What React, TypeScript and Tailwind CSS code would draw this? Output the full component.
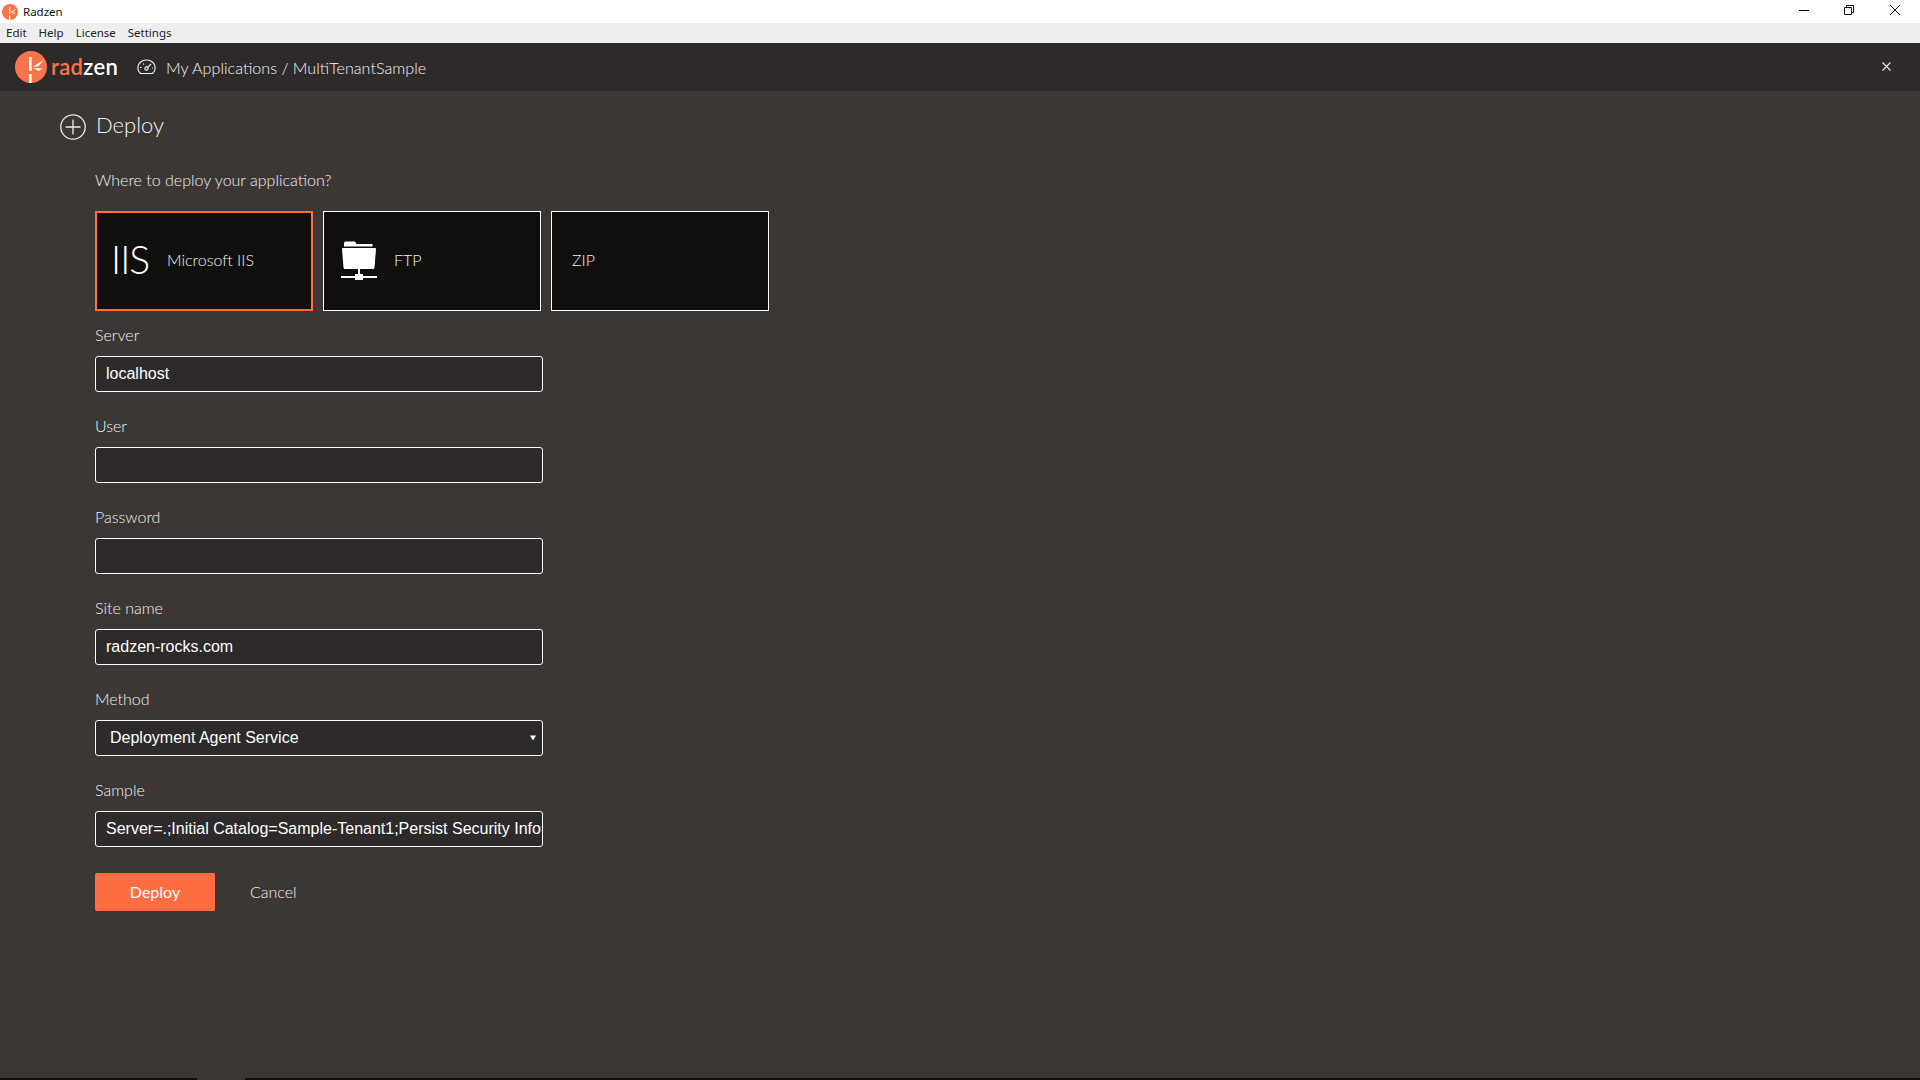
import React from "react";

const lato = "font-['Lato','Liberation_Sans',sans-serif]";
const arial = "font-['Liberation_Sans',Arial,sans-serif]";

function Logo({ size }: { size: number }) {
  return (
    <svg width={size} height={size} viewBox="0 0 32 32" className="shrink-0">
      <circle cx="16" cy="16" r="16" fill="#f9744b" />
      <rect x="14" y="6" width="2.6" height="14" fill="#fff" />
      <rect x="14" y="23" width="2.6" height="9" fill="#fff" />
      <path d="M18 15.5 L29 9 L23 15.6 Z" fill="#fff" />
      <path d="M18 17 L27 17.5 L24 20 Z" fill="#fff" />
    </svg>
  );
}

function Field({ label, value, pad = "pl-[10px] pr-[10px]" }: { label: string; value: string; pad?: string }) {
  return (
    <div className="flex flex-col">
      <label className={`${lato} text-[16px] font-light leading-[20px] text-[#f0f0f0] mb-[11px]`}>{label}</label>
      <input
        readOnly
        value={value}
        className={`${arial} ${pad} h-[36px] w-[448px] rounded-[3px] border border-white bg-[#2e2a2a] text-[16px] text-white outline-none`}
      />
    </div>
  );
}

function Tile({ active, children }: { active?: boolean; children: React.ReactNode }) {
  return (
    <div
      className={`flex h-[100px] w-[218px] items-center bg-[#100f0e] pb-[3px] ${active ? "border-2 border-[#ff6d41]" : "border border-white"}`}
    >
      {children}
    </div>
  );
}

export default function App() {
  return (
    <div className="flex h-[1080px] w-[1920px] flex-col overflow-hidden bg-[#3c3735]">
      <div className="flex h-[23px] items-center justify-between bg-white">
        <div className="flex items-center pl-[2px]">
          <Logo size={16} />
          <span className="ml-[5px] font-['Noto_Sans',sans-serif] text-[11.5px] text-[#111]">Radzen</span>
        </div>
        <div className="flex items-center pr-[20px] pb-[3px]">
          <svg width="10" height="10" viewBox="0 0 10 10" className="mr-[35px]">
            <path d="M0 5.5H10" stroke="#111" strokeWidth="1" />
          </svg>
          <svg width="10" height="10" viewBox="0 0 10 10" className="mr-[36px]">
            <path d="M.5 2.5h7v7h-7zM2.5 2.5V.5h7v7H7.5" fill="none" stroke="#111" strokeWidth="1" />
          </svg>
          <svg width="10" height="10" viewBox="0 0 10 10">
            <path d="M0 0L10 10M10 0L0 10" stroke="#111" strokeWidth="1" />
          </svg>
        </div>
      </div>

      <div className="flex h-[20px] items-center gap-[12px] bg-[#efefef] pl-[6px] font-['Noto_Sans',sans-serif] text-[11.5px] text-[#222]">
        <span>Edit</span>
        <span>Help</span>
        <span>License</span>
        <span>Settings</span>
      </div>

      <div className="flex h-[48px] items-center bg-[#2e2a2a] pl-[15px] pr-[29px]">
        <Logo size={32} />
        <span className={`${lato} ml-[4px] text-[22px] font-semibold leading-none tracking-[0.3px]`}>
          <span className="text-[#f9744b]">rad</span>
          <span className="text-white">zen</span>
        </span>
        <svg width="19" height="16" viewBox="0 0 19 16" className="ml-[19px]" fill="none" stroke="#f0f0f0" strokeWidth="1.2">
          <path d="M3.5 14.5C1.8 13 .8 11 .8 8.8 .8 4.4 4.6 1 9.5 1s8.7 3.4 8.7 7.8c0 2.2-1 4.2-2.7 5.7z" />
          <circle cx="9.5" cy="9.5" r="1.6" />
          <path d="M10.8 8.4L14 5M3 8.5h1.5M15 9h1M6 4.5l.8 1" />
        </svg>
        <span className={`${lato} ml-[10px] pt-[2px] text-[16.15px] font-light text-[#f4f4f4]`}>My Applications / MultiTenantSample</span>
        <svg width="9" height="9" viewBox="0 0 9 9" className="ml-auto mb-[2px]">
          <path d="M.5.5L8.5 8.5M8.5.5L.5 8.5" stroke="#e8e8e8" strokeWidth="1.1" />
        </svg>
      </div>

      <div className="flex flex-1 flex-col">
        <div className="flex items-center pl-[60px] pt-[21px]">
          <svg width="26" height="26" viewBox="0 0 26 26" fill="none" stroke="#eeeeee" strokeWidth="1.3">
            <circle cx="13" cy="13" r="12.2" />
            <path d="M13 5.5V20.5M5.5 13H20.5" />
          </svg>
          <span className={`${lato} ml-[10px] mb-[4px] text-[22px] font-light leading-[26px] text-[#f4f4f4]`}>Deploy</span>
        </div>

        <div className="flex flex-col pl-[95px]">
          <p className={`${lato} mt-[28px] text-[16px] font-light leading-[20px] text-[#f0f0f0]`}>Where to deploy your application?</p>
          <div className="mt-[21px] flex gap-[10px]">
            <Tile active>
              <span className={`${lato} ml-[14px] w-[40px] text-[39px] font-light leading-none tracking-[-1px] text-white`}>IIS</span>
              <span className={`${lato} ml-[16px] text-[16px] font-light text-[#f0f0f0]`}>Microsoft IIS</span>
            </Tile>
            <Tile>
              <svg width="36" height="40" viewBox="0 0 36 40" className="ml-[17px] mt-[3px]" fill="#fff">
                <path d="M3 3.5V2.2C3 1 3.8.5 5 .5h7.5c1.5 0 2 .5 3 2.5H31.5v2.5H3z" />
                <path d="M2.2 7H33.8C34.6 7 35 7.4 35 8.2L33.5 26.5c0 .9-.5 1.5-1.4 1.5H4c-.9 0-1.4-.6-1.5-1.5L1 8.2C1 7.4 1.4 7 2.2 7z" />
                <rect x="17" y="28" width="2" height="5" />
                <rect x="14" y="33" width="8" height="6" />
                <rect x="0" y="35" width="36" height="2" />
              </svg>
              <span className={`${lato} ml-[17px] text-[16px] font-light text-[#f0f0f0]`}>FTP</span>
            </Tile>
            <Tile>
              <span className={`${lato} ml-[20px] text-[16px] font-light text-[#f0f0f0]`}>ZIP</span>
            </Tile>
          </div>

          <div className="mt-[14px] flex flex-col gap-[24px]">
            <Field label="Server" value="localhost" />
            <Field label="User" value="" />
            <Field label="Password" value="" />
            <Field label="Site name" value="radzen-rocks.com" />
            <div className="flex flex-col">
              <label className={`${lato} mb-[11px] text-[16px] font-light leading-[20px] text-[#f0f0f0]`}>Method</label>
              <div className={`${arial} flex h-[36px] w-[448px] items-center justify-between rounded-[3px] border border-white bg-[#2e2a2a] pl-[14px] pr-[6px] text-[16px] text-white`}>
                <span>Deployment Agent Service</span>
                <svg width="6" height="6" viewBox="0 0 6 6"><path d="M0 .5H6L3 5.5Z" fill="#fff" /></svg>
              </div>
            </div>
            <Field
              label="Sample"
              value="Server=.;Initial Catalog=Sample-Tenant1;Persist Security Info=True;User ID=sa;Password=secret"
              pad="pl-[10px] pr-0"
            />
          </div>

          <div className="mt-[26px] flex items-center">
            <button className={`${lato} h-[38px] w-[120px] rounded-[2px] bg-[#ff6d41] text-[16px] text-white`}>Deploy</button>
            <span className={`${lato} ml-[35px] text-[16px] font-light text-[#f0f0f0]`}>Cancel</span>
          </div>
        </div>
      </div>

      <div className="flex h-[2px] bg-[#100f0e]">
        <div className="ml-[197px] w-[48px] bg-[#3c3735]" />
      </div>
    </div>
  );
}
